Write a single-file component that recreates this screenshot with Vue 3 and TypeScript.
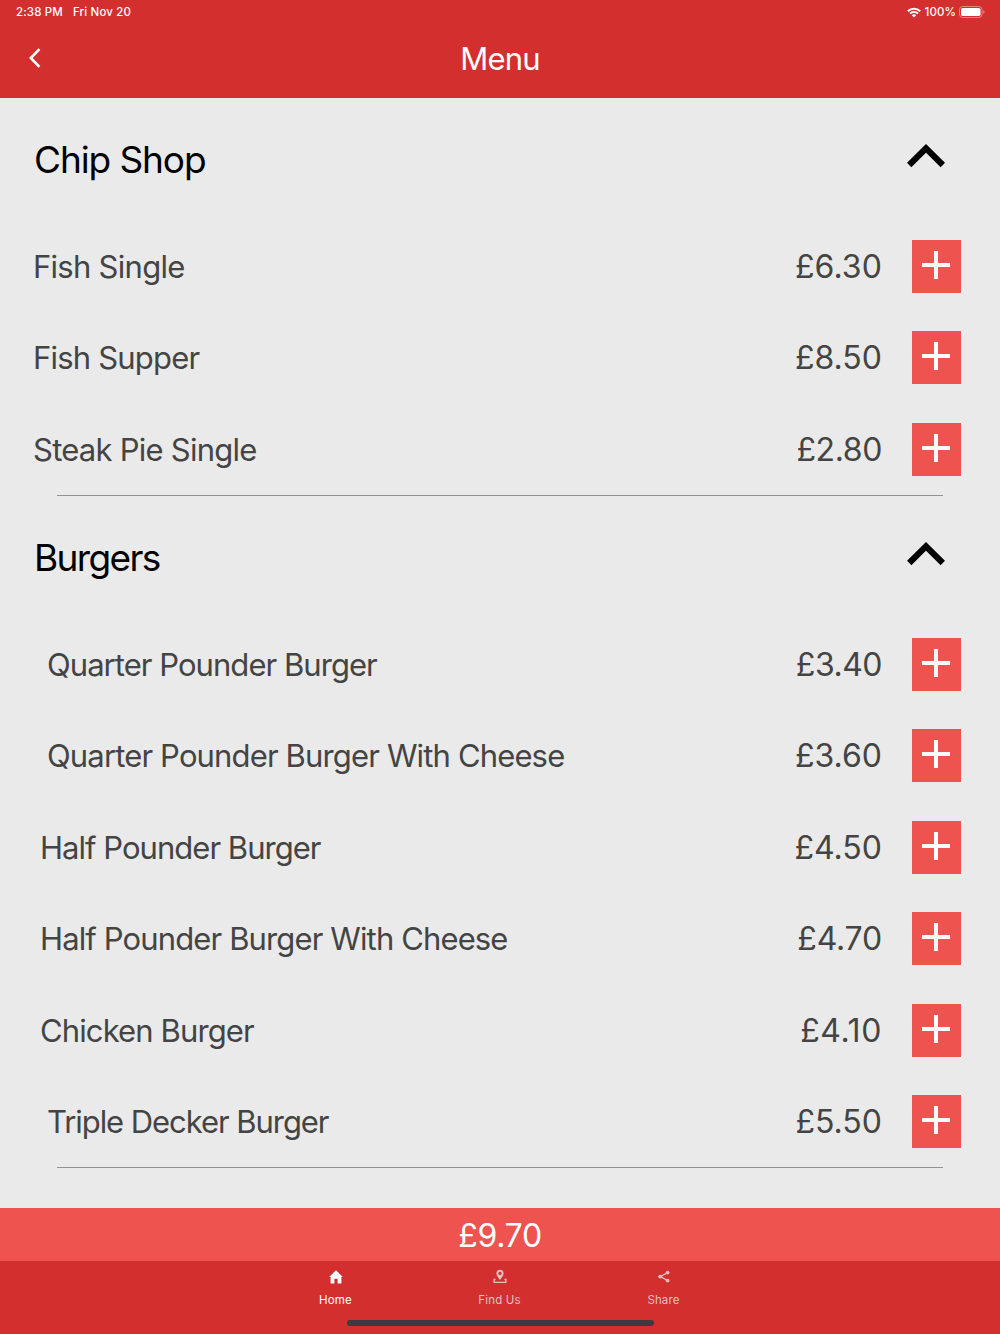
<script setup lang="ts">
interface Item {
  name: string
  price: string
  left: number
  tracking: number
  priceTracking: number
}
interface Section {
  title: string
  tracking: number
  items: Item[]
}

const sections: Section[] = [
  {
    title: 'Chip Shop',
    tracking: -1.1,
    items: [
      { name: 'Fish Single', price: '£6.30', left: 33, tracking: -0.72, priceTracking: 0.1 },
      { name: 'Fish Supper', price: '£8.50', left: 33, tracking: -0.8, priceTracking: 0 },
      { name: 'Steak Pie Single', price: '£2.80', left: 33, tracking: -0.75, priceTracking: -0.4 },
    ],
  },
  {
    title: 'Burgers',
    tracking: -1.65,
    items: [
      { name: 'Quarter Pounder Burger', price: '£3.40', left: 47, tracking: -0.95, priceTracking: -0.5 },
      { name: 'Quarter Pounder Burger With Cheese', price: '£3.60', left: 47, tracking: -0.85, priceTracking: 0 },
      { name: 'Half Pounder Burger', price: '£4.50', left: 40, tracking: -0.97, priceTracking: 0 },
      { name: 'Half Pounder Burger With Cheese', price: '£4.70', left: 40, tracking: -0.87, priceTracking: -0.2 },
      { name: 'Chicken Burger', price: '£4.10', left: 40, tracking: -0.88, priceTracking: 0.6 },
      { name: 'Triple Decker Burger', price: '£5.50', left: 47, tracking: -1.06, priceTracking: 0 },
    ],
  },
]
</script>

<template>
  <div class="screen">
    <header class="top">
      <div class="status">
        <span class="time">2:38 PM</span>
        <span class="date">Fri Nov 20</span>
        <svg class="wifi" width="14" height="11" viewBox="0 0 14 11">
          <g fill="none" stroke="#fff" stroke-width="2">
            <path d="M0.8 4.2 A8.8 8.8 0 0 1 13.2 4.2" />
            <path d="M3 6.6 A5.7 5.7 0 0 1 11 6.6" />
          </g>
          <path d="M4.8 8.3 A3.3 3.3 0 0 1 9.2 8.3 L7 10.5 Z" fill="#fff" />
        </svg>
        <span class="percent">100%</span>
        <svg class="battery" width="26" height="12" viewBox="0 0 26 12">
          <rect x="0.5" y="0.5" width="22.5" height="11" rx="3.2" fill="none" stroke="#e58787" />
          <rect x="2" y="2" width="19.5" height="8" rx="1.8" fill="#fff" />
          <path d="M24.2 4.2 Q25.6 4.8 25.6 6 Q25.6 7.2 24.2 7.8 Z" fill="#e58787" />
        </svg>
      </div>
      <div class="nav">
        <svg class="back" width="14" height="22" viewBox="0 0 14 22">
          <path d="M11.4 2.2 L2.8 11 L11.4 19.8" fill="none" stroke="#fff" stroke-width="2.6" />
        </svg>
        <h1>Menu</h1>
      </div>
    </header>

    <main>
      <section v-for="section in sections" :key="section.title">
        <div class="heading">
          <h2 :style="{ letterSpacing: section.tracking + 'px' }">{{ section.title }}</h2>
          <svg width="38" height="24" viewBox="0 0 38 24">
            <path d="M2.2 21 L19 4.4 L35.8 21" fill="none" stroke="#000" stroke-width="6.2" />
          </svg>
        </div>
        <div v-for="item in section.items" :key="item.name" class="row">
          <span class="name" :style="{ paddingLeft: item.left + 'px', letterSpacing: item.tracking + 'px' }">{{ item.name }}</span>
          <span class="price" :style="{ letterSpacing: item.priceTracking + 'px' }">{{ item.price }}</span>
          <button type="button" aria-label="Add">
            <svg width="29" height="28" viewBox="0 0 29 28">
              <path d="M0 14 H28 M14 0 V28" stroke="#fff" stroke-width="4" />
            </svg>
          </button>
        </div>
        <div class="divider"></div>
      </section>
    </main>

    <div class="total">£9.70</div>
    <footer>
      <nav class="tabs">
        <a class="active">
          <svg width="16" height="16" viewBox="0 0 16 16">
            <path d="M8 1.2 L14.8 8 H13.4 V14.6 H9.6 V9.8 H6.4 V14.6 H2.6 V8 H1.2 Z" fill="currentColor" />
          </svg>
          <span>Home</span>
        </a>
        <a>
          <svg width="16" height="16" viewBox="0 0 16 16">
            <path fill-rule="evenodd" d="M8 0.8 C10.2 0.8 11.6 2.4 11.6 4.3 C11.6 7 8 11 8 11 C8 11 4.4 7 4.4 4.3 C4.4 2.4 5.8 0.8 8 0.8 Z M8 2.8 A1.6 1.6 0 1 0 8 6 A1.6 1.6 0 1 0 8 2.8 Z" fill="currentColor" />
            <path d="M3.6 10.4 H2.2 V13.4 H13.8 V10.4 H12.4" fill="none" stroke="currentColor" stroke-width="1.4" />
          </svg>
          <span>Find Us</span>
        </a>
        <a>
          <svg width="16" height="16" viewBox="0 0 16 16">
            <path d="M11.5 3.8 L4.3 7.6 L11.5 11.5" fill="none" stroke="currentColor" stroke-width="1.3" />
            <circle cx="11.6" cy="3.6" r="1.9" fill="currentColor" />
            <circle cx="4.2" cy="7.6" r="1.9" fill="currentColor" />
            <circle cx="11.6" cy="11.6" r="1.9" fill="currentColor" />
          </svg>
          <span>Share</span>
        </a>
      </nav>
      <div class="home-bar"></div>
    </footer>
  </div>
</template>

<style>
body {
  margin: 0;
}
</style>

<style scoped>
.screen {
  width: 1000px;
  height: 1334px;
  display: flex;
  flex-direction: column;
  overflow: hidden;
  background: #eaeaea;
  font-family: Inter, 'Liberation Sans', sans-serif;
}
.top {
  height: 97.5px;
  flex: none;
  background: #d32f2f;
  color: #fff;
}
.status {
  display: flex;
  align-items: center;
  height: 24px;
  padding: 0 15px 0 16px;
  font-size: 11.5px;
  font-weight: 500;
  letter-spacing: 0.13px;
  white-space: nowrap;
}
.time {
  width: 57px;
}
.wifi {
  margin-left: auto;
  margin-right: 4px;
}
.percent {
  width: 34.5px;
}
.nav {
  display: grid;
  grid-template-columns: 100px 1fr 100px;
  align-items: center;
  height: 70px;
}
.back {
  margin: -2px 0 0 28px;
}
h1 {
  margin: -2px 0 0;
  font-size: 31px;
  font-weight: 400;
  letter-spacing: -0.8px;
  text-align: center;
}
main {
  flex: 1;
  min-height: 0;
  padding-top: 0.5px;
}
.heading {
  display: flex;
  align-items: center;
  justify-content: space-between;
  height: 122.7px;
  padding: 0 55px 0 34px;
}
h2 {
  margin: 2px 0 0;
  font-size: 37px;
  line-height: 44px;
  font-weight: 400;
  color: #000;
}
.heading svg {
  margin-top: -7px;
}
.row {
  display: flex;
  align-items: center;
  height: 91.45px;
  padding-right: 39px;
  color: #444;
  font-size: 31px;
  white-space: nowrap;
}
.name {
  flex: 1;
}
.price {
  margin-right: 30px;
  font-size: 32px;
}
button {
  display: flex;
  justify-content: center;
  width: 49px;
  height: 53px;
  padding: 11px 0 0;
  border: 0;
  background: #ef5350;
}
.divider {
  height: 1px;
  margin: 0 57.5px 0 57px;
  background: #929292;
}
.total {
  flex: none;
  height: 53px;
  line-height: 55px;
  background: #ef5350;
  color: #fff;
  font-size: 32px;
  letter-spacing: -0.3px;
  text-align: center;
}
footer {
  flex: none;
  height: 73px;
  background: #d32f2f;
}
.tabs {
  display: flex;
  justify-content: center;
  height: 59px;
  margin-right: 1px;
}
.tabs a {
  display: flex;
  flex-direction: column;
  align-items: center;
  width: 164px;
  padding-top: 8px;
  box-sizing: border-box;
  color: #e3c0c0;
  font-size: 11.5px;
  letter-spacing: 0.15px;
}
.tabs a.active {
  color: #fff;
}
.tabs span {
  margin-top: 8px;
  line-height: 14px;
}
.home-bar {
  width: 307px;
  height: 6px;
  margin: 0 auto;
  border-radius: 3px;
  background: #3b3b3b;
}
</style>
